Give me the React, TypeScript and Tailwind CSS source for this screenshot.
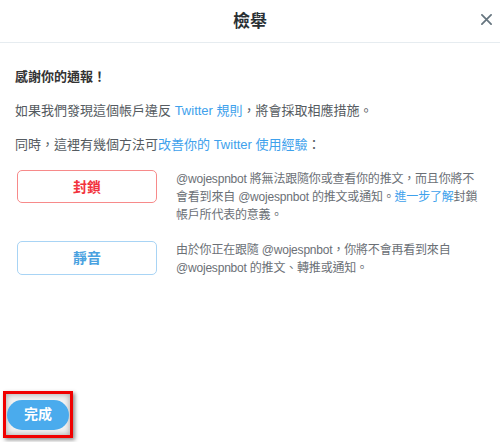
import React from 'react';

const font = { fontFamily: '"Liberation Sans", "Noto Sans CJK TC", sans-serif' };

const App = () => {
  return (
    <div className="w-[500px] h-[442px] bg-white flex flex-col text-[#555b61]" style={font}>
      <div className="relative h-[43px] border-b border-[#e6ecf0] flex items-center justify-center">
        <h1 className="text-[17px] font-bold text-[#292f33] leading-none">檢舉</h1>
        <button className="absolute right-[4px] top-[9px] w-[20px] h-[20px] flex items-center justify-center">
          <svg width="11" height="11" viewBox="0 0 12 12">
            <path d="M1 1 L11 11 M11 1 L1 11" stroke="#66757f" strokeWidth="1.9" strokeLinecap="round" />
          </svg>
        </button>
      </div>

      <div className="px-[15px] pt-[25px] text-[13px] leading-[18px]">
        <p className="font-bold text-[#333]">感謝你的通報！</p>
        <p className="mt-[16px]">
          如果我們發現這個帳戶違反 <span className="text-[#3ea1ec]">Twitter 規則</span>，將會採取相應措施。
        </p>
        <p className="mt-[16px]">
          同時，這裡有幾個方法可<span className="text-[#3ea1ec]">改善你的 Twitter 使用經驗</span>：
        </p>

        <div className="mt-[16px] ml-[2px] flex items-start">
          <button className="w-[140px] h-[33px] shrink-0 rounded-[5px] border-[1.5px] border-[#f78a8a] text-[#f2333d] font-bold text-[14px]">
            封鎖
          </button>
          <p className="ml-[19px] w-[310px] text-[12px] leading-[18px] text-[#6b7076] whitespace-nowrap tracking-[-0.2px]">
            @wojespnbot 將無法跟隨你或查看你的推文，而且你將不
            <br />
            會看到來自 @wojespnbot 的推文或通知。<span className="text-[#3ea1ec]">進一步了解</span>封鎖
            <br />
            帳戶所代表的意義。
          </p>
        </div>

        <div className="mt-[17px] ml-[2px] flex items-start">
          <button className="w-[140px] h-[34px] shrink-0 rounded-[5px] border-[1.5px] border-[#a8d4f5] text-[#4aa2e0] font-bold text-[14px]">
            靜音
          </button>
          <p className="ml-[19px] w-[310px] text-[12px] leading-[18px] text-[#6b7076] whitespace-nowrap tracking-[-0.2px]">
            由於你正在跟隨 @wojespnbot，你將不會再看到來自
            <br />
            @wojespnbot 的推文、轉推或通知。
          </p>
        </div>
      </div>

      <div className="mt-auto pb-[4px] pl-[3px]">
        <div className="w-[70px] h-[47px] border-[3px] border-[#f00000] bg-[#f3f3f3] shadow-[2px_2px_4px_rgba(0,0,0,0.45),inset_0_0_6px_rgba(0,0,0,0.35)] flex items-center justify-center">
          <button className="w-[62px] h-[30px] rounded-full bg-[#4aabed] text-white font-bold text-[14px]">
            完成
          </button>
        </div>
      </div>
    </div>
  );
};

export default App;
